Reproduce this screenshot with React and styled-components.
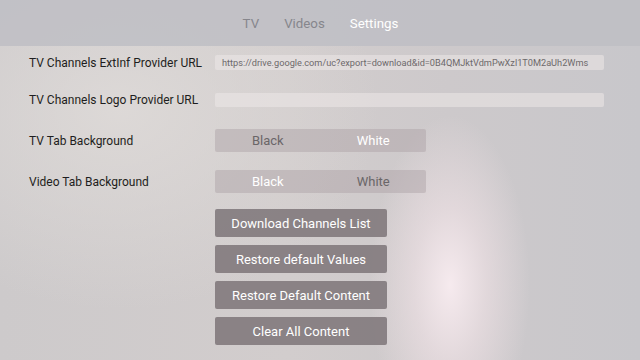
import React from "react";
import styled, { createGlobalStyle } from "styled-components";

const Global = createGlobalStyle`
  html, body { margin: 0; padding: 0; }
  body {
    width: 640px; height: 360px; overflow: hidden;
    font-family: Roboto, "Liberation Sans", Arial, sans-serif;
  }
`;

const Screen = styled.div`
  width: 640px; height: 360px; position: relative; overflow: hidden;
  background:
    radial-gradient(ellipse 80px 170px at 450px 285px, rgba(248,236,240,0.95) 0%, rgba(240,226,230,0.6) 45%, rgba(230,220,224,0) 100%),
    radial-gradient(ellipse 260px 200px at 120px 110px, rgba(222,218,216,0.9) 0%, rgba(222,218,216,0) 100%),
    linear-gradient(90deg, #cdcacb 0%, #d2cdcd 45%, #cdc9cb 70%, #c8c7cb 100%);
`;

const Header = styled.div`
  height: 46px;
  background: rgba(190,190,196,0.85);
  display: flex; justify-content: center; align-items: center;
  gap: 25px; padding-left: 1px;
`;

const Tab = styled.span`
  font-size: 13.3px;
  color: ${p => (p.$active ? "#ffffff" : "#86868c")};
`;

const Content = styled.div`
  display: flex; flex-direction: column;
  padding-left: 29px;
`;

const Row = styled.div`
  display: flex; align-items: center;
  height: ${p => p.$h}px;
  margin-top: ${p => p.$mt}px;
`;

const Label = styled.div`
  width: 186px; flex: none;
  font-size: 12px; color: #1e1e20;
  white-space: nowrap;
`;

const Input = styled.div`
  width: 389px; height: 100%;
  box-sizing: border-box;
  background: rgba(236,232,232,0.55);
  border-radius: 2px;
  padding-left: 7px;
  display: flex; align-items: center;
  font-size: 9.2px; color: #6d696b;
  white-space: nowrap; overflow: hidden;
`;

const Segmented = styled.div`
  width: 211px; height: 100%;
  display: flex;
  background: rgba(170,160,163,0.45);
  border-radius: 2px;
`;

const Segment = styled.div`
  flex: 1; display: flex; align-items: center; justify-content: center;
  font-size: 13px;
  color: ${p => (p.$active ? "#ffffff" : "#6a6668")};
`;

const Buttons = styled.div`
  display: flex; flex-direction: column; gap: 8px;
  margin-top: 16px; margin-left: 186px;
`;

const Button = styled.div`
  width: 172px; height: 28px;
  background: rgba(128,120,123,0.88);
  border-radius: 2px;
  display: flex; align-items: center; justify-content: center;
  font-size: 13px; color: #ffffff;
`;

export default function App() {
  return (
    <Screen>
      <Global />
      <Header>
        <Tab>TV</Tab>
        <Tab>Videos</Tab>
        <Tab $active>Settings</Tab>
      </Header>
      <Content>
        <Row $h={15} $mt={9}>
          <Label>TV Channels ExtInf Provider URL</Label>
          <Input>https://drive.google.com/uc?export=download&amp;id=0B4QMJktVdmPwXzl1T0M2aUh2Wms</Input>
        </Row>
        <Row $h={14} $mt={23}>
          <Label>TV Channels Logo Provider URL</Label>
          <Input />
        </Row>
        <Row $h={23} $mt={22}>
          <Label>TV Tab Background</Label>
          <Segmented>
            <Segment>Black</Segment>
            <Segment $active>White</Segment>
          </Segmented>
        </Row>
        <Row $h={23} $mt={18}>
          <Label>Video Tab Background</Label>
          <Segmented>
            <Segment $active>Black</Segment>
            <Segment>White</Segment>
          </Segmented>
        </Row>
        <Buttons>
          <Button>Download Channels List</Button>
          <Button>Restore default Values</Button>
          <Button>Restore Default Content</Button>
          <Button>Clear All Content</Button>
        </Buttons>
      </Content>
    </Screen>
  );
}
